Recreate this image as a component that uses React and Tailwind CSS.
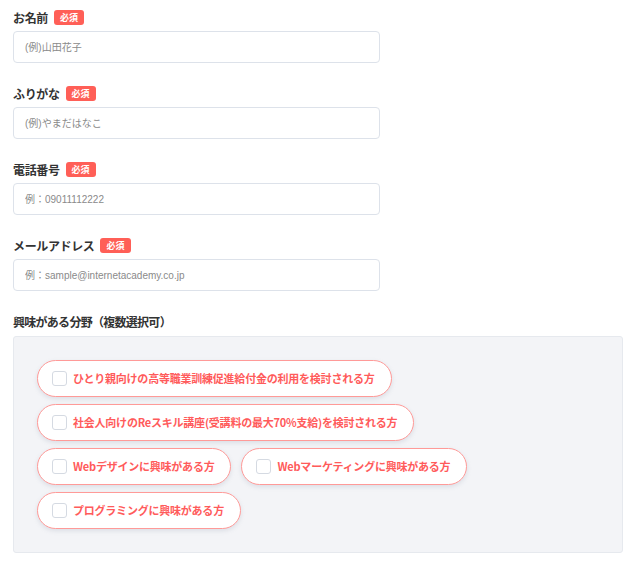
import React from "react";

const fields = [
  { label: "お名前", placeholder: "(例)山田花子" },
  { label: "ふりがな", placeholder: "(例)やまだはなこ" },
  { label: "電話番号", placeholder: "例：09011112222" },
  { label: "メールアドレス", placeholder: "例：sample@internetacademy.co.jp" },
];

const interests = [
  ["ひとり親向けの高等職業訓練促進給付金の利用を検討される方"],
  ["社会人向けのReスキル講座(受講料の最大70%支給)を検討される方"],
  ["Webデザインに興味がある方", "Webマーケティングに興味がある方"],
  ["プログラミングに興味がある方"],
];

const Pill = ({ text }) => (
  <label className="flex items-center h-[37px] pl-[14px] pr-[16px] bg-white border border-[#ff9a98] rounded-full shadow-[0_2px_4px_rgba(150,160,180,0.25)] cursor-pointer">
    <span className="w-[15px] h-[15px] border border-[#d5dae2] rounded-[3px] bg-white mr-[6px] shrink-0" />
    <span className="text-[11px] font-bold text-[#ff5b5b] tracking-[-0.02em] whitespace-nowrap">{text}</span>
  </label>
);

export default function App() {
  return (
    <div className="bg-white w-[640px] h-[564px] px-[13px] pt-[10px] text-[#333]" style={{ fontFamily: '"Noto Sans CJK JP", "Noto Sans", sans-serif' }}>
      {fields.map((f) => (
        <div key={f.label} className="mb-[23px]">
          <div className="flex items-center h-[15px] gap-[6px]">
            <span className="text-[12px] font-bold text-[#333] tracking-[-0.03em]">{f.label}</span>
            <span className="bg-[#ff5f57] text-white text-[9px] font-bold leading-none px-[6px] h-[15px] flex items-center rounded-[3px]">必須</span>
          </div>
          <input
            className="mt-[6px] block w-[367px] h-[32px] border border-[#dde2ea] rounded-[4px] px-[11px] text-[10px] placeholder:text-[#8a8a8a] outline-none"
            style={{ fontFamily: '"Liberation Sans", "Noto Sans CJK JP", sans-serif' }}
            placeholder={f.placeholder}
          />
        </div>
      ))}
      <div className="flex items-center h-[15px]">
        <span className="text-[12px] font-bold text-[#333] tracking-[-0.06em]">興味がある分野（複数選択可）</span>
      </div>
      <div className="mt-[7px] w-[610px] bg-[#f3f4f7] border border-[#e6e9ee] rounded-[3px] p-[23px] flex flex-col gap-[7px]">
        {interests.map((row, i) => (
          <div key={i} className="flex gap-[10px]">
            {row.map((t) => (
              <Pill key={t} text={t} />
            ))}
          </div>
        ))}
      </div>
    </div>
  );
}
